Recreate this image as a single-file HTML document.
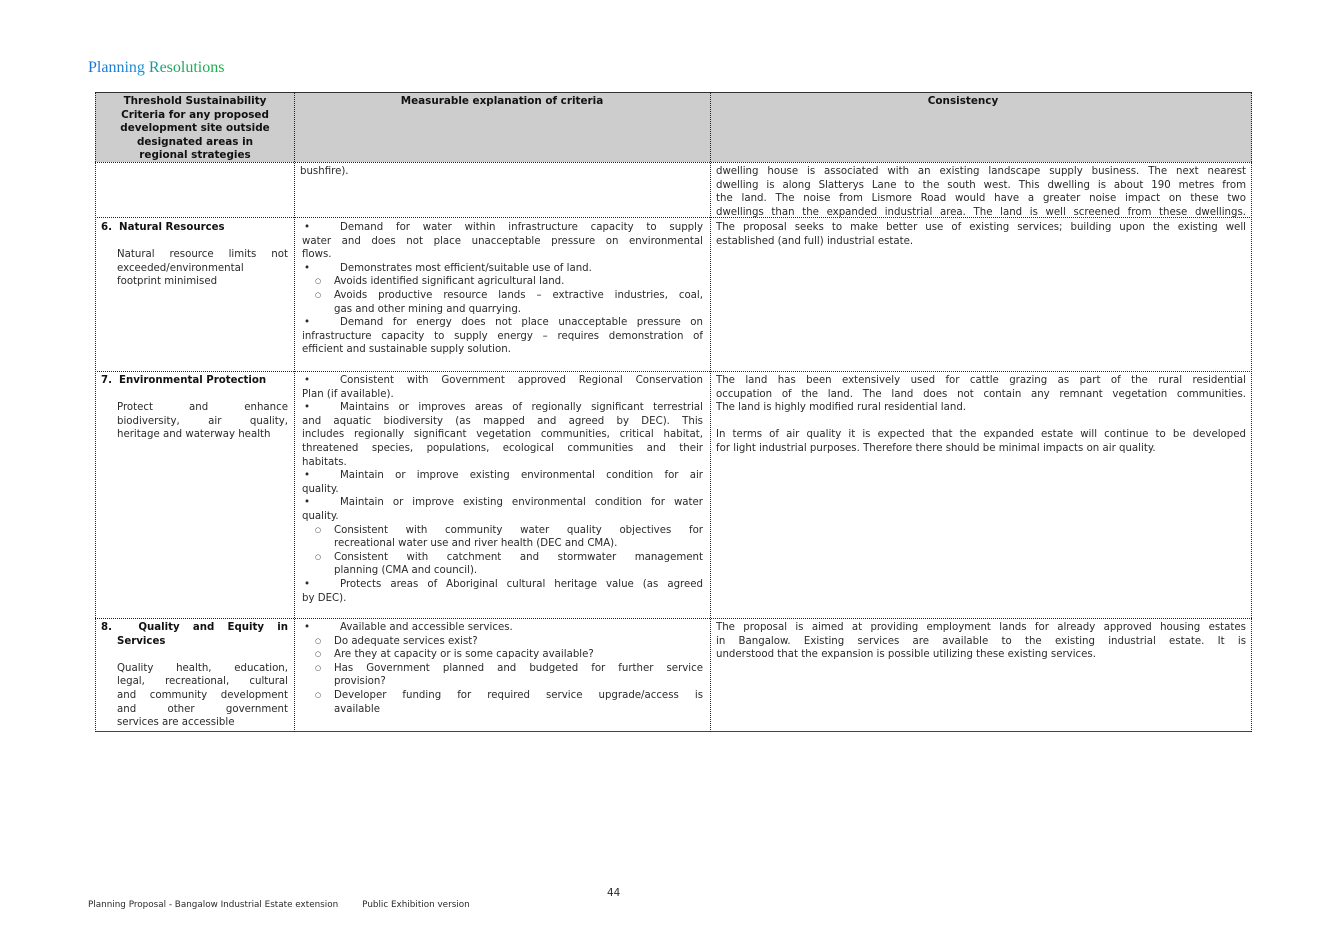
<!DOCTYPE html>
<html><head><meta charset="utf-8">
<style>
body{margin:0;width:1340px;height:947px;background:#fff;position:relative;overflow:hidden;font-family:"DejaVu Sans","Liberation Sans",sans-serif;color:#2a2a2a}
.title{position:absolute;left:88px;top:59px;font:16px "Liberation Serif",serif;background:linear-gradient(90deg,#1a6fd6 0,#1a8fd0 40%,#1aa860 60%,#18b048 100%);-webkit-background-clip:text;background-clip:text;color:transparent}
.hd{position:absolute;top:92px;height:70px;background:#cdcdcd}
.v{position:absolute;top:92px;height:640px;border-left:1px dotted #222;width:0}
.h{position:absolute;left:95px;width:1157px;border-top:1px dotted #222;height:0}
.c{position:absolute;font-size:10.2px;line-height:13.6px;margin-top:2px}
.c div{height:13.6px;overflow:hidden;position:relative}
.j{text-align:justify;text-align-last:justify}
.b{padding-left:38px}
.b::before{content:"•";position:absolute;left:2px;top:0}
.s{padding-left:32px}
.s::before{content:"○";position:absolute;left:13px;top:0;font-size:7px}
.t{padding-left:32px}
.bold{font-weight:bold;color:#111}
.hc{position:absolute;top:95px;font-weight:bold;font-size:10.4px;line-height:13.6px;text-align:center;color:#111}
</style></head><body>
<div class="title">Planning Resolutions</div>

<div class="hd" style="left:95px;width:1157px"></div>
<div class="h" style="top:92px;border-top:1px solid #333"></div>
<div class="h" style="top:162px"></div>
<div class="h" style="top:217px"></div>
<div class="h" style="top:371px"></div>
<div class="h" style="top:618px"></div>
<div class="h" style="top:731px;border-top:1px solid #444"></div>
<div class="v" style="left:95px"></div>
<div class="v" style="left:294px"></div>
<div class="v" style="left:710px"></div>
<div class="v" style="left:1251px"></div>

<div class="hc" style="left:98px;width:194px">Threshold Sustainability<br>Criteria for any proposed<br>development site outside<br>designated areas in<br>regional strategies</div>
<div class="hc" style="left:296px;width:412px">Measurable explanation of criteria</div>
<div class="hc" style="left:712px;width:502px">Consistency</div>

<!-- row 1 -->
<div class="c" style="left:300px;top:163px;width:403px"><div>bushfire).</div></div>
<div class="c" style="left:716px;top:163px;width:530px">
<div class="j">dwelling house is associated with an existing landscape supply business.  The next nearest</div>
<div class="j">dwelling is along Slatterys Lane to the south west.  This dwelling is about 190 metres from</div>
<div class="j">the land.  The noise from Lismore Road would have a greater noise impact on these two</div>
<div class="j">dwellings than the expanded industrial area.  The land is well screened from these dwellings.</div>
</div>

<!-- row 6 -->
<div class="c" style="left:101px;top:219px;width:187px">
<div class="bold">6.&nbsp; Natural Resources</div><div></div>
<div class="j" style="margin-left:16px">Natural resource limits not</div>
<div style="margin-left:16px">exceeded/environmental</div>
<div style="margin-left:16px">footprint minimised</div>
</div>
<div class="c" style="left:302px;top:219px;width:401px">
<div class="j b">Demand for water within infrastructure capacity to supply</div>
<div class="j">water and does not place unacceptable pressure on environmental</div>
<div>flows.</div>
<div class="b">Demonstrates most efficient/suitable use of land.</div>
<div class="s">Avoids identified significant agricultural land.</div>
<div class="j s">Avoids productive resource lands – extractive industries, coal,</div>
<div class="t">gas and other mining and quarrying.</div>
<div class="j b">Demand for energy does not place unacceptable pressure on</div>
<div class="j">infrastructure capacity to supply energy – requires demonstration of</div>
<div>efficient and sustainable supply solution.</div>
</div>
<div class="c" style="left:716px;top:219px;width:530px">
<div class="j">The proposal seeks to make better use of existing services; building upon the existing well</div>
<div>established (and full) industrial estate.</div>
</div>

<!-- row 7 -->
<div class="c" style="left:101px;top:372px;width:187px">
<div class="bold">7.&nbsp; Environmental Protection</div><div></div>
<div class="j" style="margin-left:16px">Protect and enhance</div>
<div class="j" style="margin-left:16px">biodiversity, air quality,</div>
<div style="margin-left:16px">heritage and waterway health</div>
</div>
<div class="c" style="left:302px;top:372px;width:401px">
<div class="j b">Consistent with Government approved Regional Conservation</div>
<div>Plan (if available).</div>
<div class="j b">Maintains or improves areas of regionally significant terrestrial</div>
<div class="j">and aquatic biodiversity (as mapped and agreed by DEC). This</div>
<div class="j">includes regionally significant vegetation communities, critical habitat,</div>
<div class="j">threatened species, populations, ecological communities and their</div>
<div>habitats.</div>
<div class="j b">Maintain or improve existing environmental condition for air</div>
<div>quality.</div>
<div class="j b">Maintain or improve existing environmental condition for water</div>
<div>quality.</div>
<div class="j s">Consistent with community water quality objectives for</div>
<div class="t">recreational water use and river health (DEC and CMA).</div>
<div class="j s">Consistent with catchment and stormwater management</div>
<div class="t">planning (CMA and council).</div>
<div class="j b">Protects areas of Aboriginal cultural heritage value (as agreed</div>
<div>by DEC).</div>
</div>
<div class="c" style="left:716px;top:372px;width:530px">
<div class="j">The land has been extensively used for cattle grazing as part of the rural residential</div>
<div class="j">occupation of the land.  The land does not contain any remnant vegetation communities.</div>
<div>The land is highly modified rural residential land.</div>
<div></div>
<div class="j">In terms of air quality it is expected that the expanded estate will continue to be developed</div>
<div>for light industrial purposes.  Therefore there should be minimal impacts on air quality.</div>
</div>

<!-- row 8 -->
<div class="c" style="left:101px;top:619px;width:187px">
<div class="j bold">8.&nbsp; Quality and Equity in</div>
<div class="bold" style="margin-left:16px">Services</div><div></div>
<div class="j" style="margin-left:16px">Quality health, education,</div>
<div class="j" style="margin-left:16px">legal, recreational, cultural</div>
<div class="j" style="margin-left:16px">and community development</div>
<div class="j" style="margin-left:16px">and other government</div>
<div style="margin-left:16px">services are accessible</div>
</div>
<div class="c" style="left:302px;top:619px;width:401px">
<div class="b">Available and accessible services.</div>
<div class="s">Do adequate services exist?</div>
<div class="s">Are they at capacity or is some capacity available?</div>
<div class="j s">Has Government planned and budgeted for further service</div>
<div class="t">provision?</div>
<div class="j s">Developer funding for required service upgrade/access is</div>
<div class="t">available</div>
</div>
<div class="c" style="left:716px;top:619px;width:530px">
<div class="j">The proposal is aimed at providing employment lands for already approved housing estates</div>
<div class="j">in Bangalow.  Existing services are available to the existing industrial estate.  It is</div>
<div>understood that the expansion is possible utilizing these existing services.</div>
</div>

<div style="position:absolute;left:607px;top:887px;font-size:10.4px">44</div>
<div style="position:absolute;left:88px;top:900px;font-size:8.8px;white-space:nowrap">Planning Proposal - Bangalow Industrial Estate extension<span style="display:inline-block;width:24px"></span>Public Exhibition version</div>
</body></html>
